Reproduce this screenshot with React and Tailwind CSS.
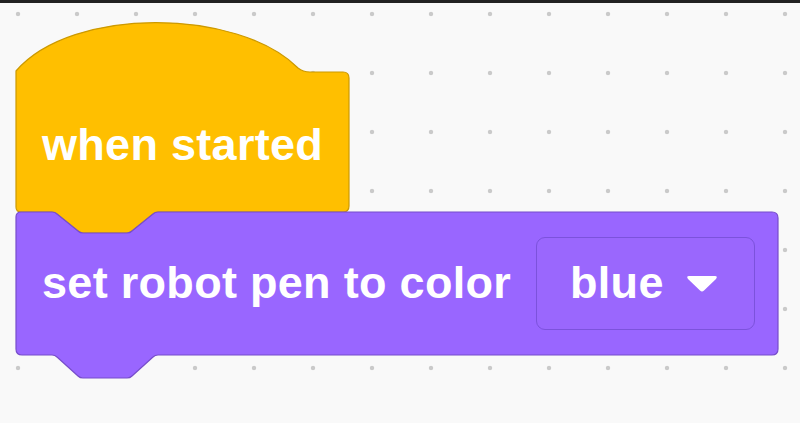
import React from 'react'

const FONT = { fontFamily: '"Liberation Sans", Arial, sans-serif' }

function HatBlock({ label }) {
  return (
    <div className="relative h-[190px] w-[333px]">
      <svg className="absolute left-0 top-0 overflow-visible" width="333" height="190" viewBox="0 0 333 190">
        <path
          d="M0,49 C56,-16 222,-14 282,46 Q287,50 294,50 L327,50 Q333,50 333,56 L333,184 Q333,190 327,190 L142,190 Q139,190 137,192 L116,209 Q114,211 111,211 L67,211 Q64,211 62,209 L41,192 Q39,190 36,190 L5,190 Q0,190 0,185 Z"
          fill="#ffbf00"
          stroke="#cc9900"
          strokeWidth="1.2"
        />
      </svg>
      <div className="relative pl-[26px] pt-[100px] text-[45px] font-bold leading-none tracking-[0.3px] text-white" style={FONT}>
        {label}
      </div>
    </div>
  )
}

function PenBlock() {
  return (
    <div className="relative h-[143px] w-[762px]">
      <svg className="absolute left-0 top-0 overflow-visible" width="762" height="143" viewBox="0 0 762 143">
        <path
          d="M0,5 Q0,0 5,0 L36,0 Q39,0 41,2 L62,19 Q64,21 67,21 L111,21 Q114,21 116,19 L137,2 Q139,0 142,0 L756,0 Q762,0 762,6 L762,137 Q762,143 756,143 L142,143 Q139,143 137,145 L116,164 Q114,166 111,166 L67,166 Q64,166 62,164 L41,145 Q39,143 36,143 L6,143 Q0,143 0,137 Z"
          fill="#9966ff"
          stroke="#774dcb"
          strokeWidth="1.2"
        />
      </svg>
      <div className="relative flex h-full items-center justify-between pl-[26px] pr-[23px] text-[45px] font-bold leading-none tracking-[0.3px] text-white" style={FONT}>
        <span className="-mt-[3px]">set robot pen to color</span>
        <div className="flex h-[93px] w-[219px] items-center rounded-[9px] border-[1.5px] border-[#7c52dc] bg-[#9a67fd] pl-[33px]">
          <span className="-mt-[3px]">blue</span>
          <svg className="ml-[22px]" width="32" height="18" viewBox="0 0 32 18">
            <path d="M3,1 L29,1 Q32,1 30,4 L18,15.5 Q16,17.5 14,15.5 L2,4 Q0,1 3,1 Z" fill="#ffffff" />
          </svg>
        </div>
      </div>
    </div>
  )
}

export default function App() {
  return (
    <div className="flex h-[423px] w-[800px] flex-col overflow-hidden bg-[#f9f9f9]">
      <div className="h-[3px] bg-[#222222]" />
      <div className="flex-1 bg-[radial-gradient(circle_at_18px_11px,#cacaca_1.8px,transparent_2.6px)] bg-[length:59px_59px] pl-[16px] pt-[19px]">
        <div className="flex flex-col">
          <HatBlock label="when started" />
          <PenBlock />
        </div>
      </div>
    </div>
  )
}
